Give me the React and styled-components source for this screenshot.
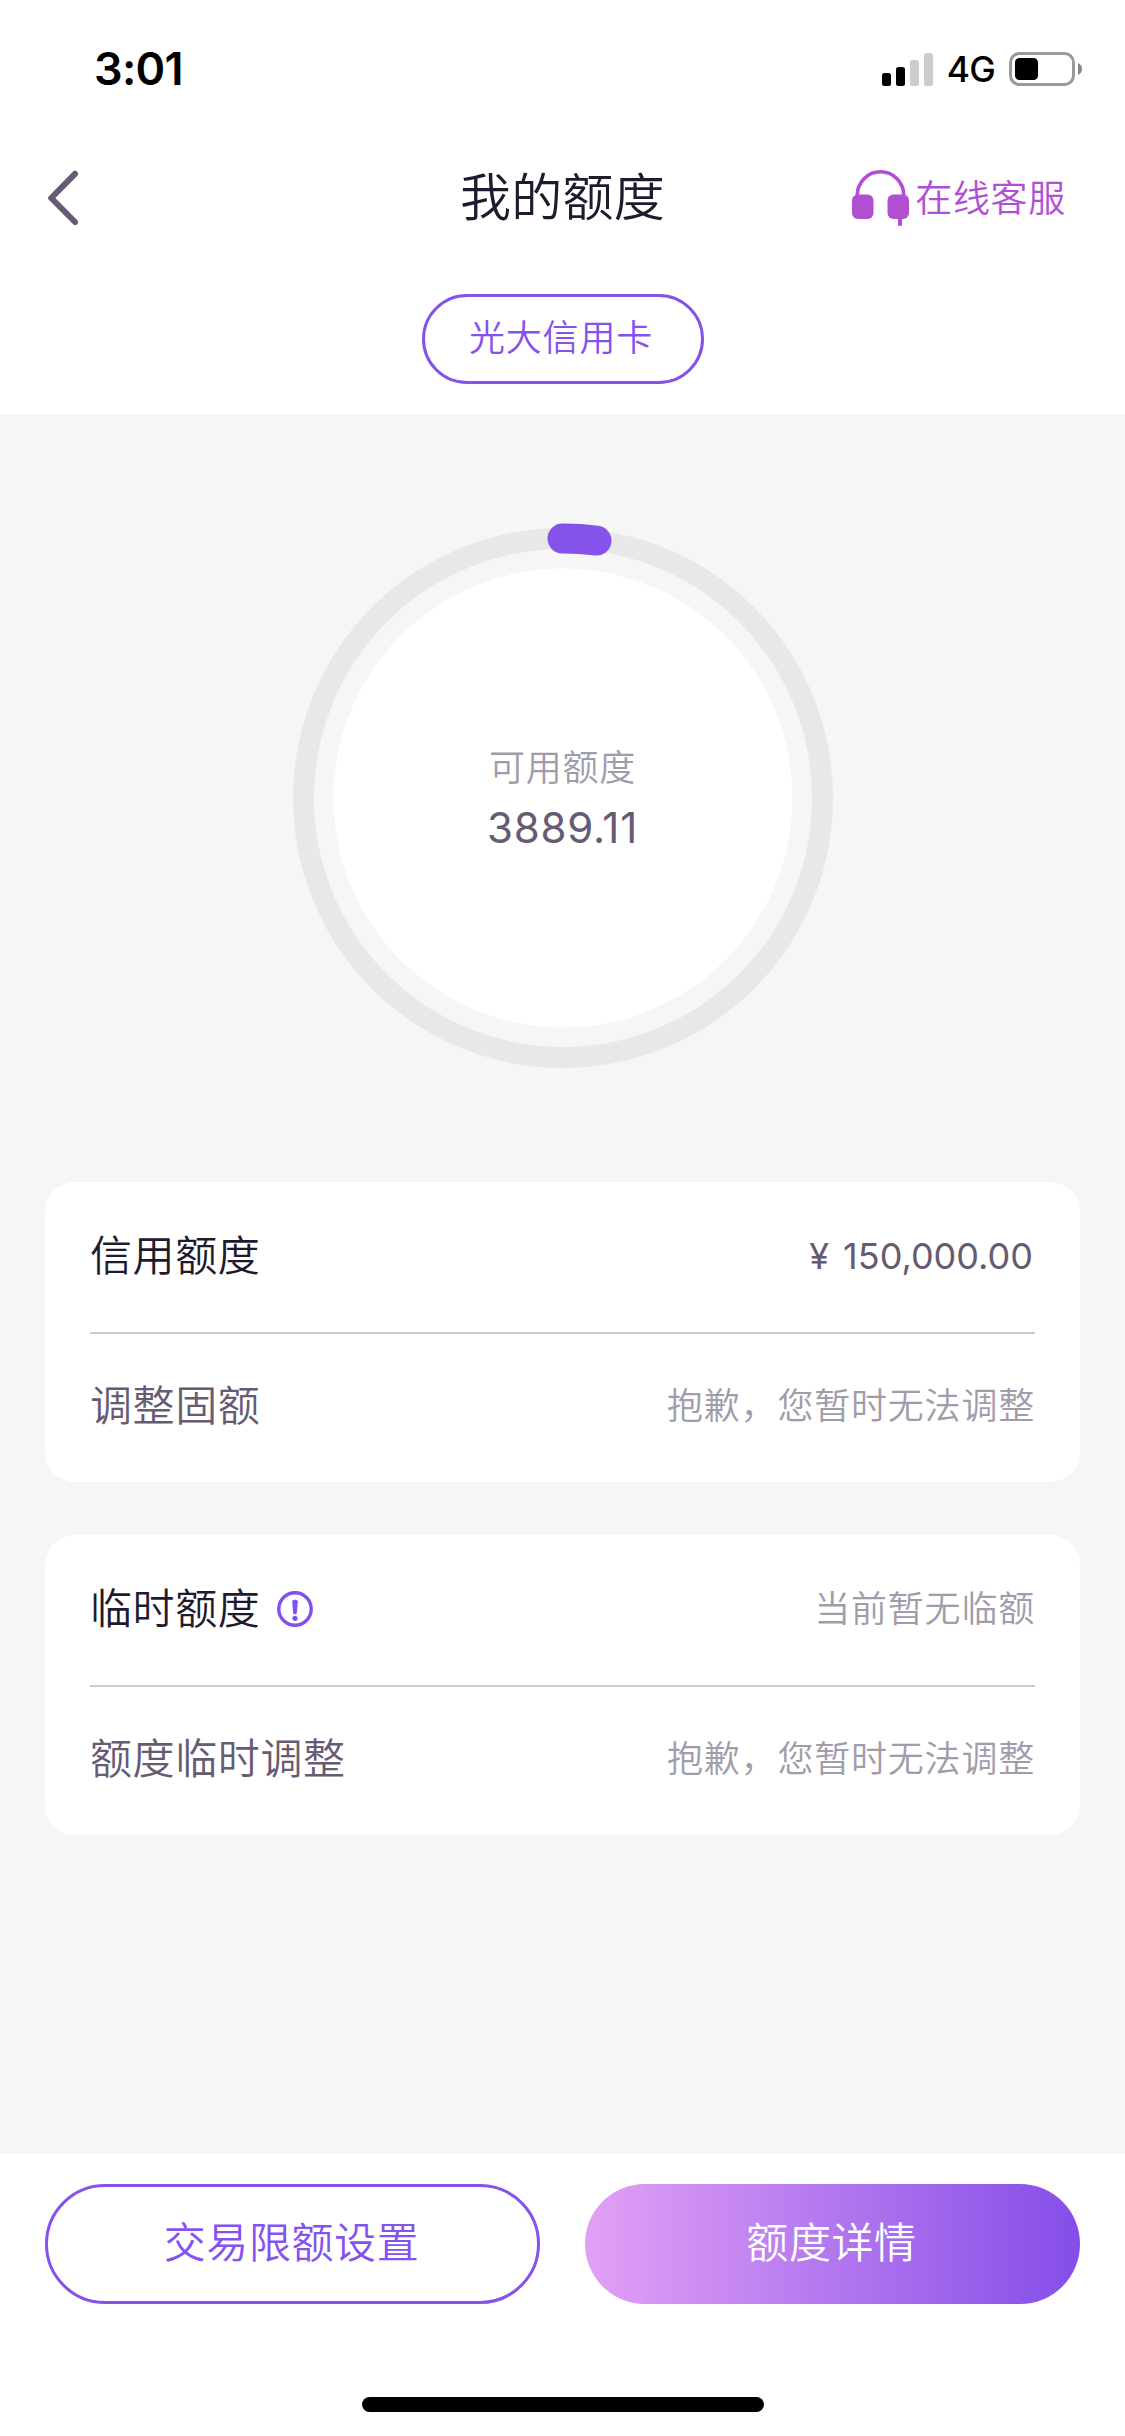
import React from 'react';
import styled, { createGlobalStyle } from 'styled-components';

const GlobalStyle = createGlobalStyle`
  body {
    margin: 0;
    background-color: #fff;
    font-family: Inter, "Noto Sans CJK SC", sans-serif;
    font-weight: 350;
  }
`;

const Page = styled.div`
  display: flex;
  flex-direction: column;
  width: 1125px;
  height: 2436px;
  overflow: hidden;
  background-color: #fff;
  white-space: nowrap;
`;

const StatusBar = styled.div`
  display: flex;
  justify-content: space-between;
  align-items: center;
  box-sizing: border-box;
  height: 138px;
  padding: 0 42px 0 94px;
`;

const Time = styled.div`
  font-size: 45px;
  font-weight: 600;
  line-height: 60px;
  letter-spacing: -0.7px;
`;

const StatusIcons = styled.div`
  display: flex;
  align-items: center;
`;

const Network = styled.span`
  margin: 2px 14px 0 14px;
  font-size: 35.5px;
  font-weight: 500;
  line-height: 40px;
  letter-spacing: -0.8px;
`;

const NavBar = styled.div`
  display: grid;
  grid-template-columns: 1fr auto 1fr;
  align-items: center;
  height: 120px;
  padding: 0 45px;
`;

const Title = styled.h1`
  margin: 0;
  font-size: 51px;
  font-weight: 350;
  line-height: 60px;
  letter-spacing: 0.3px;
  color: #1f1a2e;
`;

const Service = styled.div`
  display: flex;
  align-items: center;
  justify-self: end;
  gap: 6px;
  margin-right: 14px;
  font-size: 37px;
  line-height: 50px;
  letter-spacing: 0.7px;
  color: #b04fd6;
  span {
    padding-top: 2px;
  }
`;

const CardTab = styled.div`
  display: flex;
  justify-content: center;
  box-sizing: border-box;
  height: 156px;
  padding-top: 36px;
`;

const Tab = styled.div`
  box-sizing: border-box;
  width: 282px;
  height: 90px;
  padding-right: 3px;
  border: 3px solid #8552ea;
  border-radius: 45px;
  font-size: 36px;
  line-height: 82px;
  letter-spacing: 0.8px;
  text-align: center;
  color: #8552ee;
`;

const Content = styled.div`
  flex: 1;
  padding: 108px 45px 0;
  background-color: #f6f6f6;
`;

const Gauge = styled.div`
  display: grid;
  place-items: center;
  height: 552px;
  margin-bottom: 108px;
  > * {
    grid-area: 1 / 1;
  }
`;

const GaugeText = styled.div`
  text-align: center;
  .label {
    padding-top: 3px;
    font-size: 36px;
    line-height: 54px;
    letter-spacing: 0.8px;
    color: #9f9cab;
  }
  .amount {
    padding-top: 3px;
    font-size: 42px;
    font-weight: 400;
    line-height: 60px;
    letter-spacing: 0.8px;
    color: #665b73;
  }
`;

const Card = styled.div`
  margin-bottom: 53px;
  padding: 0 45px;
  border-radius: 30px;
  background-color: #fff;
`;

const Row = styled.div`
  display: flex;
  justify-content: space-between;
  align-items: center;
  box-sizing: border-box;
  height: 150px;
  padding-bottom: 2px;
  & + & {
    padding-bottom: 4px;
    border-top: 2px solid #ccc;
  }
`;

const Label = styled.div`
  display: flex;
  align-items: center;
  gap: 17px;
  font-size: 42px;
  line-height: 60px;
  letter-spacing: 0.6px;
  color: ${props => (props.$dark ? '#1f1a2e' : '#665b73')};
`;

const Value = styled.div`
  padding-right: ${props => (props.$money ? '2px' : '0')};
  font-size: 36px;
  font-weight: ${props => (props.$money ? 400 : 350)};
  line-height: 54px;
  letter-spacing: ${props => (props.$money ? '0' : '0.8px')};
  word-spacing: 4px;
  color: ${props => (props.$money ? '#665b73' : '#9f9cab')};
`;

const Footer = styled.div`
  display: flex;
  flex-direction: column;
  align-items: center;
  justify-content: space-between;
  box-sizing: border-box;
  height: 282px;
  padding: 30px 45px 24px;
`;

const Actions = styled.div`
  display: grid;
  grid-template-columns: 1fr 1fr;
  gap: 45px;
  width: 100%;
`;

const Button = styled.button`
  box-sizing: border-box;
  height: 120px;
  padding: 0 2px 9px 0;
  border: ${props => (props.$primary ? 'none' : '3px solid #8552ea')};
  border-radius: 60px;
  background: ${props =>
    props.$primary ? 'linear-gradient(90deg, #e2a1f5 0%, #b377ee 50%, #844de8 100%)' : '#fff'};
  font-family: inherit;
  font-size: 42px;
  font-weight: 350;
  letter-spacing: 0.6px;
  color: ${props => (props.$primary ? '#fff' : '#8552ee')};
`;

const HomeIndicator = styled.div`
  width: 402px;
  height: 15px;
  border-radius: 8px;
  background-color: #000;
`;

const SignalIcon = () => (
  <svg width="51" height="33" viewBox="0 0 51 33">
    <rect x="0" y="20" width="9" height="13" rx="2.5" />
    <rect x="14" y="14" width="9" height="19" rx="2.5" />
    <rect x="28" y="7" width="9" height="26" rx="2.5" fill="#ccc" />
    <rect x="42" y="0" width="9" height="33" rx="2.5" fill="#ccc" />
  </svg>
);

const BatteryIcon = () => (
  <svg width="74" height="34" viewBox="0 0 74 34">
    <rect x="1.5" y="1.5" width="63" height="31" rx="9" fill="none" stroke="#9a9a9a" strokeWidth="3" />
    <rect x="6" y="6" width="23" height="22" rx="4.5" />
    <path d="M69 11c2.500 1 4 3.200 4 6s-1.500 5-4 6z" fill="#888" />
  </svg>
);

const BackIcon = () => (
  <svg width="36" height="60" viewBox="0 0 36 60">
    <path
      d="M30 5.800 6.200 30 30 54"
      fill="none"
      stroke="#665b73"
      strokeWidth="6"
      strokeLinecap="round"
      strokeLinejoin="round"
    />
  </svg>
);

const HeadphoneIcon = () => (
  <svg width="57" height="56" viewBox="0 0 57 56" fill="#b04fd0">
    <path d="M5.200 28v-2.500a23.300 23.700 0 0 1 46.600 0v2.500" fill="none" stroke="#b04fd6" strokeWidth="3.600" />
    <rect x="0" y="24.500" width="21.500" height="24.500" rx="6" />
    <rect x="35.500" y="24.500" width="21.500" height="24.500" rx="6" />
    <rect x="46" y="44" width="4" height="12" rx="1.500" />
  </svg>
);

const TipIcon = () => (
  <svg width="36" height="36" viewBox="0 0 36 36" fill="#8050f0">
    <circle cx="18" cy="18" r="16.200" fill="none" stroke="#8050f0" strokeWidth="3.400" />
    <path d="M15.200 10.300c0-2 5.600-2 5.600 0l-.9 11.400c-.2 2.200-3.600 2.200-3.800 0z" />
    <circle cx="18" cy="27.300" r="2.600" />
  </svg>
);

const GaugeRing = () => (
  <svg width="552" height="552" viewBox="0 0 552 552">
    <circle cx="276" cy="276" r="259.500" fill="none" stroke="#e8e8e8" strokeWidth="21" />
    <circle cx="276" cy="276" r="229.500" fill="#fff" />
    <path
      d="M275.500 16.500A259.500 259.500 0 0 1 309.500 18.600"
      fill="none"
      stroke="#8552ea"
      strokeWidth="30"
      strokeLinecap="round"
    />
  </svg>
);

const App = () => {
  return (
    <Page>
      <GlobalStyle />
      <StatusBar>
        <Time>3:01</Time>
        <StatusIcons>
          <SignalIcon />
          <Network>4G</Network>
          <BatteryIcon />
        </StatusIcons>
      </StatusBar>
      <NavBar>
        <BackIcon />
        <Title>我的额度</Title>
        <Service>
          <HeadphoneIcon />
          <span>在线客服</span>
        </Service>
      </NavBar>
      <CardTab>
        <Tab>光大信用卡</Tab>
      </CardTab>

      <Content>
        <Gauge>
          <GaugeRing />
          <GaugeText>
            <div className="label">可用额度</div>
            <div className="amount">3889.11</div>
          </GaugeText>
        </Gauge>
        <Card>
          <Row>
            <Label $dark>信用额度</Label>
            <Value $money>¥ 150,000.00</Value>
          </Row>
          <Row>
            <Label>调整固额</Label>
            <Value>抱歉，您暂时无法调整</Value>
          </Row>
        </Card>
        <Card>
          <Row>
            <Label $dark>
              临时额度
              <TipIcon />
            </Label>
            <Value>当前暂无临额</Value>
          </Row>
          <Row>
            <Label>额度临时调整</Label>
            <Value>抱歉，您暂时无法调整</Value>
          </Row>
        </Card>
      </Content>

      <Footer>
        <Actions>
          <Button>交易限额设置</Button>
          <Button $primary>额度详情</Button>
        </Actions>
        <HomeIndicator />
      </Footer>
    </Page>
  );
};

export default App;
